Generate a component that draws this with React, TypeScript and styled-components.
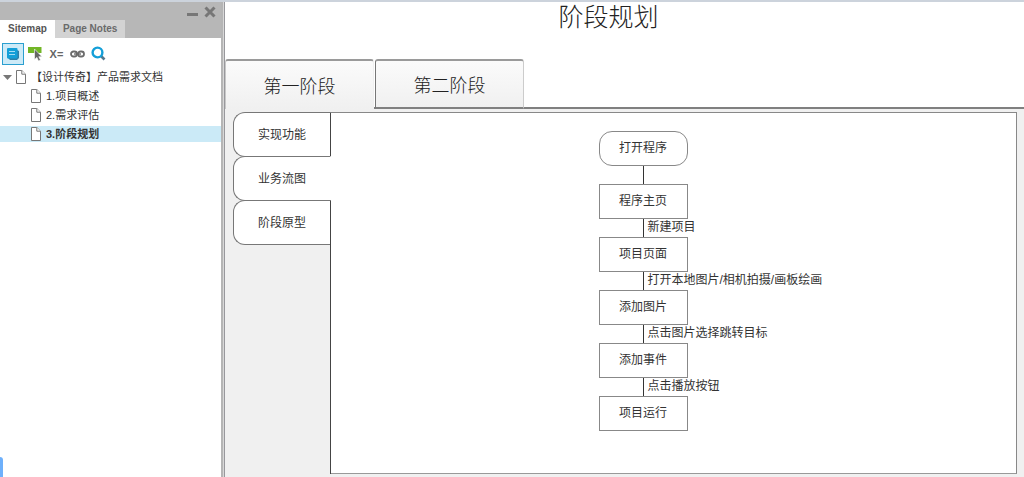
import React, { useState } from 'react';
import styled, { createGlobalStyle } from 'styled-components';

const Global = createGlobalStyle`
  *, *::before, *::after { box-sizing: border-box; }
  body {
    margin: 0;
    background: #fff;
    color: #333;
    font-family: "Liberation Sans", "Noto Sans CJK SC", sans-serif;
    font-size: 12px;
  }
  button { font: inherit; color: inherit; margin: 0; padding: 0; border: 0; background: none; cursor: pointer; }
  a { color: inherit; text-decoration: none; }
  ul { list-style: none; margin: 0; padding: 0; }
`;

const Page = styled.div`
  display: flex;
  min-height: 100vh;
  border-top: 2px solid #ccd3dc;
`;

const Sidebar = styled.aside`
  position: relative;
  flex: 0 0 221px;
  background: #fff;
`;

const Splitter = styled.div`
  flex: 0 0 4px;
  background: #d8d8d8;
  border-left: 2px solid #b5b5b5;
  border-right: 1px solid #98989c;
`;

const SidebarHeader = styled.header`
  height: 36px;
  background: #b7b7b7;
  display: flex;
  flex-direction: column;
  justify-content: space-between;
`;

const WindowButtons = styled.div`
  display: flex;
  justify-content: flex-end;
  gap: 6px;
  padding: 4px 5px 0 0;

  button { width: 12px; height: 12px; }
  svg { display: block; }
`;

const SidebarTabs = styled.div`
  display: flex;
`;

const SidebarTab = styled.button<{ $active: boolean }>`
  height: 18px;
  padding: 0 8px;
  font-size: 10px;
  font-weight: bold;
  line-height: 18px;
  color: ${p => (p.$active ? '#555' : '#6a6a6a')};
  background: ${p => (p.$active ? '#fff' : '#d3d3d3')};
`;

const Toolbar = styled.div`
  display: flex;
  align-items: center;
  gap: 2px;
  height: 31px;
  padding: 0 2px;
`;

const Tool = styled.button<{ $active?: boolean }>`
  display: grid;
  place-items: center;
  width: ${p => (p.$active ? 22 : 19)}px;
  height: 22px;
  border: ${p => (p.$active ? '1px solid #2a9fd0' : '0')};
  background: ${p => (p.$active ? '#cdeaf7' : 'transparent')};
  font-size: 11px;
  font-weight: bold;
  color: #666;
`;

const TreeRow = styled.a<{ $level: number; $selected?: boolean }>`
  display: flex;
  align-items: center;
  height: 16px;
  margin-bottom: 3px;
  padding-left: ${p => (p.$level === 0 ? 3 : 31)}px;
  background: ${p => (p.$selected ? '#cbeaf7' : 'transparent')};
  font-size: 11px;
  font-weight: ${p => (p.$selected ? 'bold' : 'normal')};
  line-height: 16px;
  white-space: nowrap;

  span { margin-left: 5px; }
`;

const Edge = styled.div`
  position: absolute;
  left: 0;
  bottom: 0;
  width: 3px;
  height: 20px;
  border-radius: 0 3px 0 0;
  background: #6eb0fb;
`;

const Main = styled.main`
  flex: 1;
  min-width: 0;
  display: flex;
  flex-direction: column;
`;

const Title = styled.h1`
  margin: 0;
  height: 57px;
  padding-right: 32px;
  font-size: 25px;
  font-weight: 300;
  line-height: 31px;
  text-align: center;
  color: #222;
`;

const StageTabs = styled.div`
  display: flex;
  gap: 1px;
  height: 50px;
  background: linear-gradient(#808080, #808080) bottom / 100% 2px no-repeat;
`;

const StageTab = styled.button<{ $active: boolean }>`
  width: 149px;
  border-top: 2px solid #9a9a9a;
  border-left: 1px solid ${p => (p.$active ? '#c8c8c8' : '#777')};
  border-right: 1px solid ${p => (p.$active ? '#f0f0f0' : '#ccc')};
  border-bottom: ${p => (p.$active ? '0' : '2px solid #808080')};
  border-radius: 3px 3px 0 0;
  background: linear-gradient(#fbfbfb, #f0f0f0);
  font-size: 18px;
  font-weight: 300;
  color: #222;
`;

const Workspace = styled.div`
  flex: 1;
  display: flex;
  padding: 3px 7px 3px 8px;
  background: #f0f0f0;
`;

const SideTabs = styled.div`
  flex: 0 0 98px;
  display: flex;
  flex-direction: column;

  &::after { content: ""; flex: 1; border-right: 1px solid #444; }
`;

const SideTab = styled.button<{ $active: boolean }>`
  height: 45px;
  margin-bottom: -1px;
  border: 1px solid #777;
  border-right-color: ${p => (p.$active ? '#fff' : '#444')};
  border-radius: 12px 0 0 12px;
  background: #fff;
  font-size: 12px;
  line-height: 16px;
`;

const Panel = styled.section`
  flex: 1;
  min-width: 0;
  display: flex;
  justify-content: center;
  padding: 18px 61px 42px 0;
  border: 1px solid #888;
  border-left: 0;
  border-bottom-color: #999;
  background: #fff;
`;

const Flow = styled.div`
  width: 89px;
`;

const FlowNode = styled.div<{ $round: boolean }>`
  height: 35px;
  border: 1px solid #888;
  border-radius: ${p => (p.$round ? 13 : 0)}px;
  line-height: 32px;
  text-align: center;
`;

const Connector = styled.div`
  display: flex;
  gap: 4px;
  height: 18px;
  margin-left: 44px;
  line-height: 16px;
  white-space: nowrap;

  &::before { content: ""; flex: 0 0 1px; background: #333; }
`;

const PageIcon = () => (
  <svg width="10" height="14" viewBox="0 0 10 14" fill="#fff" stroke="#777" aria-hidden="true">
    <path d="M.5.5h5.3l3.7 3.7v9.3h-9z" />
    <path d="M5.8.5v3.7h3.7" />
  </svg>
);

const pages = ['1.项目概述', '2.需求评估', '3.阶段规划'];
const stages = ['第一阶段', '第二阶段'];
const sections = ['实现功能', '业务流图', '阶段原型'];
const steps: { name: string; next?: string }[] = [
  { name: '打开程序', next: '' },
  { name: '程序主页', next: '新建项目' },
  { name: '项目页面', next: '打开本地图片/相机拍摄/画板绘画' },
  { name: '添加图片', next: '点击图片选择跳转目标' },
  { name: '添加事件', next: '点击播放按钮' },
  { name: '项目运行' },
];

export default function App() {
  const [pane, setPane] = useState('Sitemap');
  const [stage, setStage] = useState(0);
  const [section, setSection] = useState(1);

  return (
    <>
      <Global />
      <Page>
        <Sidebar>
          <SidebarHeader>
            <WindowButtons>
              <button aria-label="Minimize">
                <svg width="12" height="12"><path d="M1 7h11v3H1z" fill="#777" /></svg>
              </button>
              <button aria-label="Close">
                <svg width="12" height="12"><path d="M1.500 1.500l9 9M10.500 1.500l-9 9" stroke="#777" strokeWidth="3" /></svg>
              </button>
            </WindowButtons>
            <SidebarTabs>
              {['Sitemap', 'Page Notes'].map(name => (
                <SidebarTab key={name} $active={pane === name} onClick={() => setPane(name)}>{name}</SidebarTab>
              ))}
            </SidebarTabs>
          </SidebarHeader>
          <Toolbar>
            <Tool $active aria-label="Footnotes">
              <svg width="14" height="14" viewBox="0 0 14 14">
                <path d="M3 3h8l2 1v7l-2 2H4l-2-2z" fill="#2f7fa8" />
                <rect x="1" y="1" width="10.500" height="10.500" rx="1" fill="#149fd8" />
                <path d="M3 4.500h6M3 7.500h6" stroke="#a5dcf3" />
              </svg>
            </Tool>
            <Tool aria-label="Highlight interactive elements">
              <svg width="16" height="16" viewBox="0 0 16 16">
                <path d="M0 1h13.500v6H0z" fill="#72b626" />
                <path d="M6.500 3v10.500l2.400-2.100L10.500 15l2-.9-1.700-3.400H14z" fill="#666" stroke="#fff" strokeWidth=".6" />
              </svg>
            </Tool>
            <Tool aria-label="Variables">X=</Tool>
            <Tool aria-label="Link">
              <svg width="15" height="8" viewBox="0 0 15 8" fill="none" stroke="#6b6b6b" strokeWidth="1.8">
                <rect x="1" y="1.500" width="6" height="5" rx="2.500" />
                <rect x="8" y="1.500" width="6" height="5" rx="2.500" />
                <path d="M4 4h7" strokeWidth="1.4" />
              </svg>
            </Tool>
            <Tool aria-label="Search">
              <svg width="15" height="15" viewBox="0 0 15 15" fill="none">
                <path d="M10 10l3.500 3.500" stroke="#56788c" strokeWidth="2.6" />
                <circle cx="6.500" cy="6.500" r="4.900" stroke="#149fd8" strokeWidth="2.400" />
              </svg>
            </Tool>
          </Toolbar>
          <nav>
            <TreeRow href="#root" $level={0}>
              <svg width="13" height="14" aria-hidden="true"><path d="M0 5h9L4.500 10z" fill="#777" /></svg>
              <PageIcon />
              <span>【设计传奇】产品需求文档</span>
            </TreeRow>
            <ul>
              {pages.map((name, i) => (
                <li key={name}>
                  <TreeRow href={`#page${i + 1}`} $level={1} $selected={i === 2}>
                    <PageIcon />
                    <span>{name}</span>
                  </TreeRow>
                </li>
              ))}
            </ul>
          </nav>
          <Edge />
        </Sidebar>
        <Splitter />
        <Main>
          <Title>阶段规划</Title>
          <StageTabs>
            {stages.map((name, i) => (
              <StageTab key={name} $active={i === stage} onClick={() => setStage(i)}>{name}</StageTab>
            ))}
          </StageTabs>
          <Workspace>
            <SideTabs>
              {sections.map((name, i) => (
                <SideTab key={name} $active={i === section} onClick={() => setSection(i)}>{name}</SideTab>
              ))}
            </SideTabs>
            <Panel>
              <Flow>
                {steps.map((step, i) => (
                  <React.Fragment key={step.name}>
                    <FlowNode $round={i === 0}>{step.name}</FlowNode>
                    {step.next !== undefined && <Connector>{step.next}</Connector>}
                  </React.Fragment>
                ))}
              </Flow>
            </Panel>
          </Workspace>
        </Main>
      </Page>
    </>
  );
}
